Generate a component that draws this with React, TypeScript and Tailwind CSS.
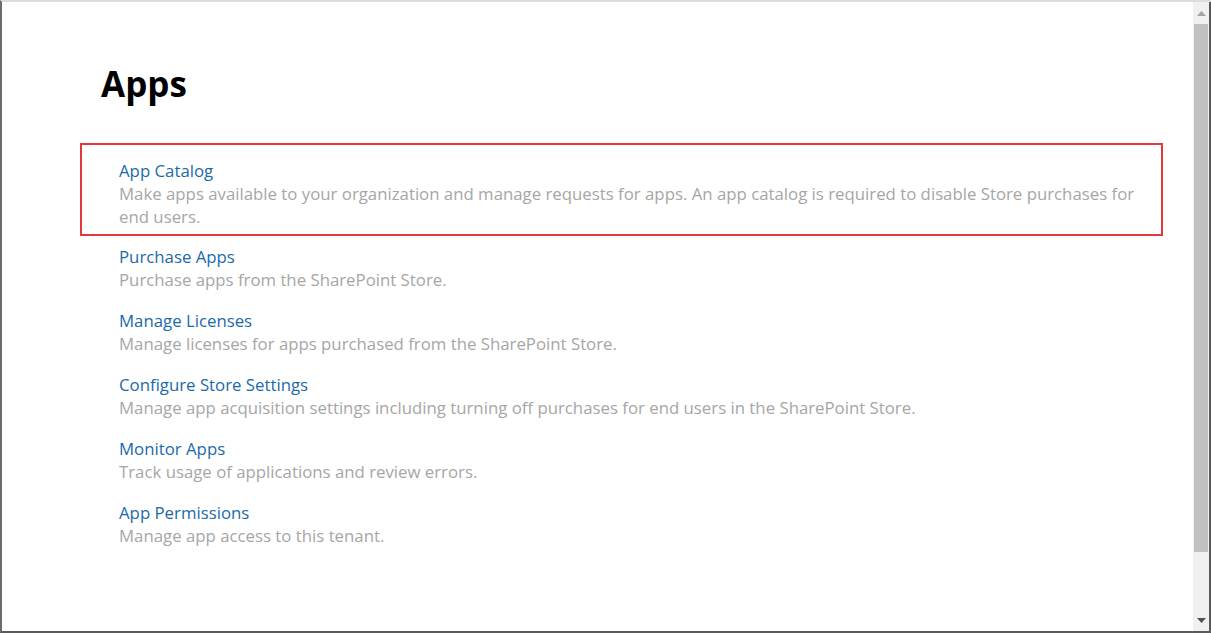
const items = [
  { title: 'App Catalog', desc: 'Make apps available to your organization and manage requests for apps. An app catalog is required to disable Store purchases for end users.' },
  { title: 'Purchase Apps', desc: 'Purchase apps from the SharePoint Store.' },
  { title: 'Manage Licenses', desc: 'Manage licenses for apps purchased from the SharePoint Store.' },
  { title: 'Configure Store Settings', desc: 'Manage app acquisition settings including turning off purchases for end users in the SharePoint Store.' },
  { title: 'Monitor Apps', desc: 'Track usage of applications and review errors.' },
  { title: 'App Permissions', desc: 'Manage app access to this tenant.' },
]

function Scrollbar() {
  return (
    <div className="w-[18px] shrink-0 flex flex-col bg-[#f0f0f0] border-r-2 border-[#5a5a5a]">
      <div className="h-[22px] grid place-items-center">
        <svg width="9" height="5" viewBox="0 0 9 5"><path d="M0 5 L4.5 0 L9 5 Z" fill="#a3a3a3" /></svg>
      </div>
      <div className="h-[528px] mx-[1px] bg-[#c1c1c1]" />
      <div className="flex-1" />
      <div className="h-[22px] grid place-items-center">
        <svg width="9" height="5" viewBox="0 0 9 5"><path d="M0 0 L9 0 L4.5 5 Z" fill="#505050" /></svg>
      </div>
    </div>
  )
}

export default function App() {
  return (
    <div className="w-[1211px] h-[633px] flex bg-white border-l-2 border-l-[#6b6b6b] border-t-2 border-t-[#dcdcdc] border-b-2 border-b-[#5a5a5a] overflow-hidden" style={{ fontFamily: '"Open Sans", "Noto Sans", sans-serif' }}>
      <div className="flex-1 pl-[99px] pt-[58px]">
        <h1 className="text-[35px] leading-[48px] font-bold text-black">Apps</h1>
        <div className="mt-[35px] flex flex-col gap-[19px]">
          {items.map((it, i) => (
            <div key={it.title} className={i === 0 ? '-ml-[21px] mr-[30px] -mb-[9px] pl-[37px] pr-[10px] pt-[15px] pb-[6px] border-2 border-[#e03a3a]' : 'pl-[18px] pr-[40px]'}>
              <div className="text-[16.8px] leading-[22px] text-[#1b6aa8]">{it.title}</div>
              <div className="text-[16.8px] leading-[23px] text-[#a6a6a6]">{it.desc}</div>
            </div>
          ))}
        </div>
      </div>
      <Scrollbar />
    </div>
  )
}
